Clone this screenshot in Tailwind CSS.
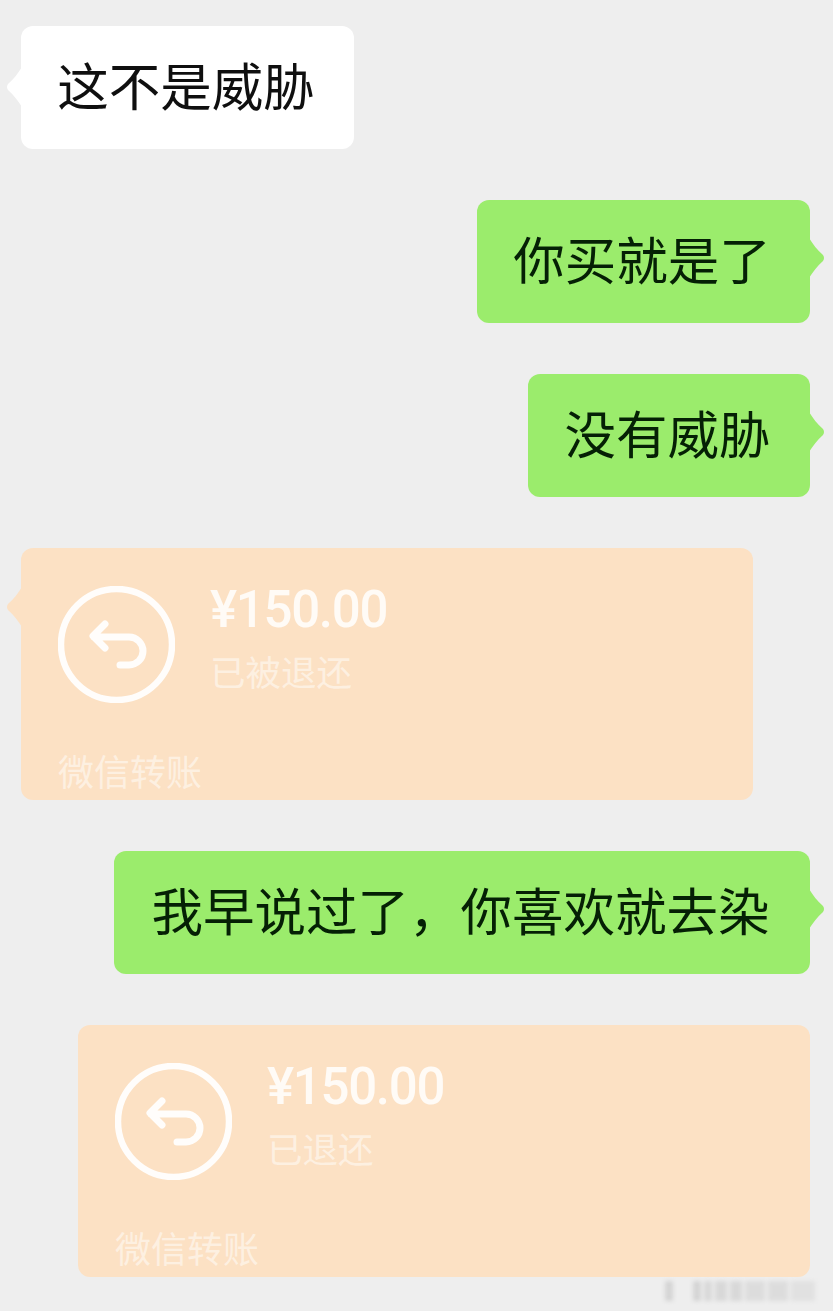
<!DOCTYPE html>
<html lang="zh">
<head>
<meta charset="utf-8">
<script src="https://cdn.jsdelivr.net/npm/@tailwindcss/browser@4"></script>
</head>
<body class="m-0 bg-[#eeeeee]">
<div class="relative w-[833px] h-[1311px] overflow-hidden bg-[#eeeeee] pt-[26px] flex flex-col gap-[51px] font-['Noto_Sans_CJK_SC','Noto_Sans_CJK_JP',sans-serif]">

  <div class="relative self-start ml-[21px] h-[123px] w-[333px] rounded-xl bg-white flex items-center justify-center pb-[7px] pr-[3px] text-[51.5px] leading-none text-[#0f0f0f]">
    <svg class="absolute left-[-15px] top-[41px] w-[16px] h-[40px]" viewBox="0 0 16 40" fill="#ffffff"><path d="M16 0 C12 6 8 12 2 17 Q0 20 2 23 C8 28 12 34 16 40 Z"/></svg>
    <span class="relative">这不是威胁</span>
  </div>

  <div class="relative self-end mr-[23px] h-[123px] w-[333px] rounded-xl bg-[#9bec6c] flex items-center justify-center pb-[7px] pr-[3px] text-[51.5px] leading-none text-[#052005]">
    <svg class="absolute right-[-15px] top-[38px] w-[16px] h-[40px]" viewBox="0 0 16 40" fill="#9bec6c"><path d="M0 0 C4 6 8 12 14 17 Q16 20 14 23 C8 28 4 34 0 40 Z"/></svg>
    <span class="relative">你买就是了</span>
  </div>

  <div class="relative self-end mr-[23px] h-[123px] w-[282px] rounded-xl bg-[#9bec6c] flex items-center justify-center pb-[7px] pr-[3px] text-[51.5px] leading-none text-[#052005]">
    <svg class="absolute right-[-15px] top-[38px] w-[16px] h-[40px]" viewBox="0 0 16 40" fill="#9bec6c"><path d="M0 0 C4 6 8 12 14 17 Q16 20 14 23 C8 28 4 34 0 40 Z"/></svg>
    <span class="relative">没有威胁</span>
  </div>

  <div class="relative self-start ml-[21px] h-[252px] w-[732px] rounded-xl bg-[#fce1c4] pl-[37px] pt-[38px] text-white">
    <svg class="absolute left-[-15px] top-[39px] w-[16px] h-[40px]" viewBox="0 0 16 40" fill="#fce1c4"><path d="M16 0 C12 6 8 12 2 17 Q0 20 2 23 C8 28 12 34 16 40 Z"/></svg>
    <div class="relative flex gap-[35px]">
      <svg class="w-[117px] h-[117px] shrink-0" viewBox="0 0 117 117" fill="none" stroke="#fff" stroke-opacity="0.92" stroke-linecap="round" stroke-linejoin="round">
        <circle cx="58.5" cy="58.5" r="55.5" stroke-width="6.5"/>
        <path d="M47 38 L35 50 L47 62 M36 51 H71 A14 14 0 0 1 71 79 H62" stroke-width="7"/>
      </svg>
      <div class="-mt-[4px]">
        <div class="font-['Roboto',sans-serif] font-medium text-[51px] leading-[56px] tracking-[-1.3px] text-white/85">¥150.00</div>
        <div class="mt-[9px] text-[35.5px] leading-[48px] text-white/50">已被退还</div>
      </div>
    </div>
    <div class="mt-[43px] text-[36px] leading-[48px] text-white/50">微信转账</div>
  </div>

  <div class="relative self-end mr-[23px] h-[123px] w-[696px] rounded-xl bg-[#9bec6c] flex items-center justify-center pb-[7px] pr-[3px] text-[51.5px] leading-none text-[#052005]">
    <svg class="absolute right-[-15px] top-[38px] w-[16px] h-[40px]" viewBox="0 0 16 40" fill="#9bec6c"><path d="M0 0 C4 6 8 12 14 17 Q16 20 14 23 C8 28 4 34 0 40 Z"/></svg>
    <span class="relative">我早说过了，你喜欢就去染</span>
  </div>

  <div class="relative self-end mr-[23px] h-[252px] w-[732px] rounded-xl bg-[#fce1c4] pl-[37px] pt-[38px] text-white">
    <div class="relative flex gap-[35px]">
      <svg class="w-[117px] h-[117px] shrink-0" viewBox="0 0 117 117" fill="none" stroke="#fff" stroke-opacity="0.92" stroke-linecap="round" stroke-linejoin="round">
        <circle cx="58.5" cy="58.5" r="55.5" stroke-width="6.5"/>
        <path d="M47 38 L35 50 L47 62 M36 51 H71 A14 14 0 0 1 71 79 H62" stroke-width="7"/>
      </svg>
      <div class="-mt-[4px]">
        <div class="font-['Roboto',sans-serif] font-medium text-[51px] leading-[56px] tracking-[-1.3px] text-white/85">¥150.00</div>
        <div class="mt-[9px] text-[35.5px] leading-[48px] text-white/50">已退还</div>
      </div>
    </div>
    <div class="mt-[43px] text-[36px] leading-[48px] text-white/50">微信转账</div>
  </div>

  <div class="absolute left-[665px] top-[1280px] w-[160px] h-[22px] flex items-center gap-[3px] blur-[2px] opacity-25">
    <span class="w-[8px] h-[20px] bg-[#888]"></span>
    <span class="w-[14px] h-[20px] bg-transparent"></span>
    <span class="w-[8px] h-[20px] bg-[#888]"></span>
    <span class="w-[8px] h-[20px] bg-[#999]"></span>
    <span class="w-[12px] h-[20px] bg-[#999]"></span>
    <span class="w-[12px] h-[20px] bg-[#999]"></span>
    <span class="w-[20px] h-[20px] bg-[#aaa]"></span>
    <span class="w-[20px] h-[20px] bg-[#aaa]"></span>
    <span class="w-[24px] h-[20px] bg-[#bbb]"></span>
  </div>
</div>
</body>
</html>
